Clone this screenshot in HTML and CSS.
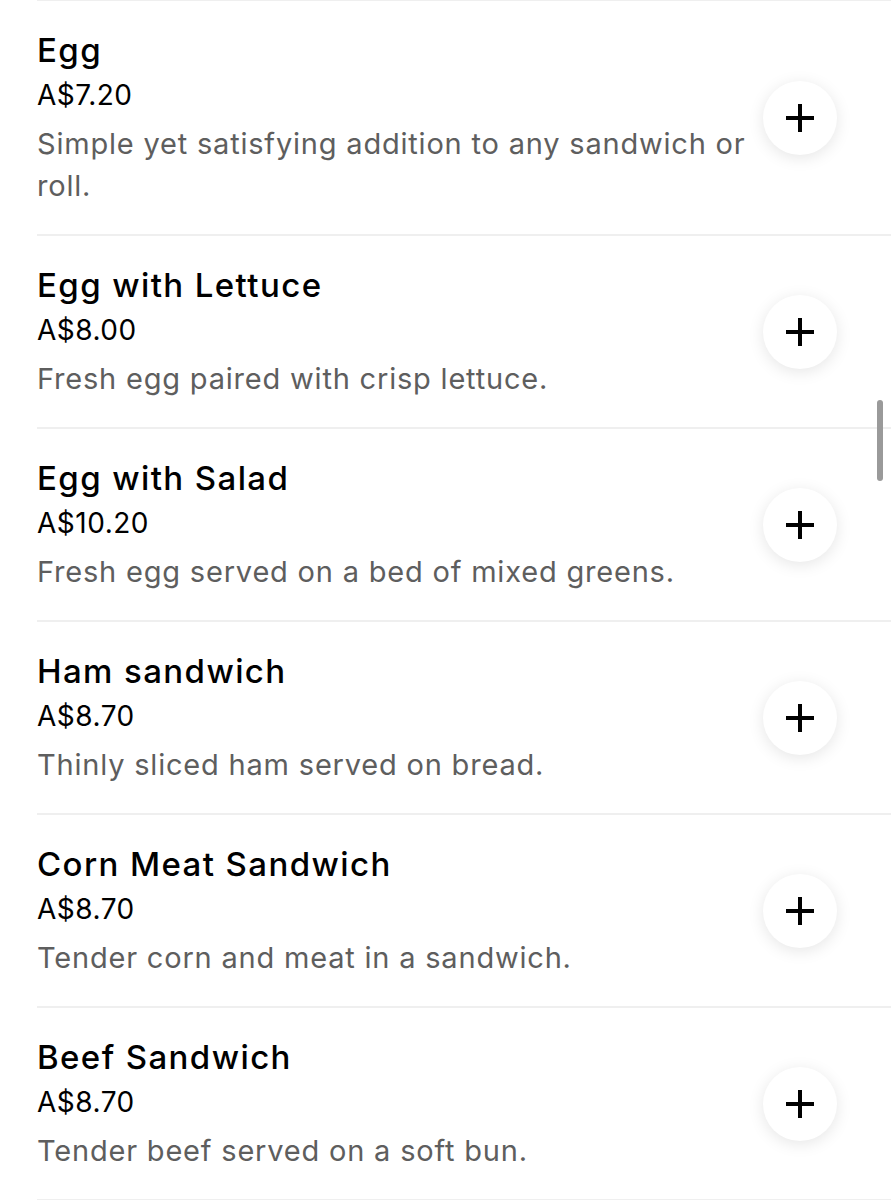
FILE: index.html
```html
<!DOCTYPE html>
<html>
<head>
    <title>Menu</title>
    <link rel="stylesheet" href="styles.css">
</head>
<body>
    <div class="menu-list">
        <div class="item">
            <div class="info">
                <div class="name">Egg</div>
                <div class="price">A$7.20</div>
                <div class="desc">Simple yet satisfying addition to any sandwich or roll.</div>
            </div>
            <button class="add-btn" type="button">
                <svg width="28" height="28" viewBox="0 0 28 28"><path d="M14 0v28M0 14h28" stroke="#000" stroke-width="4"/></svg>
            </button>
        </div>
        <div class="item">
            <div class="info">
                <div class="name">Egg with Lettuce</div>
                <div class="price">A$8.00</div>
                <div class="desc">Fresh egg paired with crisp lettuce.</div>
            </div>
            <button class="add-btn" type="button">
                <svg width="28" height="28" viewBox="0 0 28 28"><path d="M14 0v28M0 14h28" stroke="#000" stroke-width="4"/></svg>
            </button>
        </div>
        <div class="item">
            <div class="info">
                <div class="name">Egg with Salad</div>
                <div class="price">A$10.20</div>
                <div class="desc">Fresh egg served on a bed of mixed greens.</div>
            </div>
            <button class="add-btn" type="button">
                <svg width="28" height="28" viewBox="0 0 28 28"><path d="M14 0v28M0 14h28" stroke="#000" stroke-width="4"/></svg>
            </button>
        </div>
        <div class="item">
            <div class="info">
                <div class="name">Ham sandwich</div>
                <div class="price">A$8.70</div>
                <div class="desc">Thinly sliced ham served on bread.</div>
            </div>
            <button class="add-btn" type="button">
                <svg width="28" height="28" viewBox="0 0 28 28"><path d="M14 0v28M0 14h28" stroke="#000" stroke-width="4"/></svg>
            </button>
        </div>
        <div class="item">
            <div class="info">
                <div class="name">Corn Meat Sandwich</div>
                <div class="price">A$8.70</div>
                <div class="desc">Tender corn and meat in a sandwich.</div>
            </div>
            <button class="add-btn" type="button">
                <svg width="28" height="28" viewBox="0 0 28 28"><path d="M14 0v28M0 14h28" stroke="#000" stroke-width="4"/></svg>
            </button>
        </div>
        <div class="item">
            <div class="info">
                <div class="name">Beef Sandwich</div>
                <div class="price">A$8.70</div>
                <div class="desc">Tender beef served on a soft bun.</div>
            </div>
            <button class="add-btn" type="button">
                <svg width="28" height="28" viewBox="0 0 28 28"><path d="M14 0v28M0 14h28" stroke="#000" stroke-width="4"/></svg>
            </button>
        </div>
    </div>
    <div class="scrollbar"></div>
</body>
</html>
```

FILE: styles.css
```css
body {
    font-family: Inter, "Noto Sans", sans-serif;
    background-color: #fff;
    color: #000;
    margin: 0;
    padding: 0;
    overflow: hidden;
}

.menu-list {
    margin-left: 37px;
    border-top: 1px solid #efefef;
}

.item {
    display: flex;
    align-items: center;
    padding: 27px 54px 27px 0;
    border-bottom: 2px solid #efefef;
}

.info {
    flex: 1;
    padding-right: 12px;
}

.name {
    font-size: 33px;
    font-weight: 500;
    line-height: 44px;
    letter-spacing: 1.4px;
}

.price {
    font-size: 28px;
    line-height: 46px;
    letter-spacing: 0.5px;
}

.desc {
    font-size: 29px;
    line-height: 42px;
    margin-top: 5px;
    letter-spacing: 0.8px;
    color: #5e5e5e;
}

.add-btn {
    width: 74px;
    height: 74px;
    border: none;
    border-radius: 50%;
    background-color: #fff;
    box-shadow: 0 3px 16px rgba(0, 0, 0, 0.1);
    display: flex;
    align-items: center;
    justify-content: center;
    padding: 0;
    flex-shrink: 0;
}

.scrollbar {
    position: fixed;
    top: 400px;
    left: 877px;
    width: 6px;
    height: 81px;
    border-radius: 3px;
    background-color: #9a9a9a;
}
```
